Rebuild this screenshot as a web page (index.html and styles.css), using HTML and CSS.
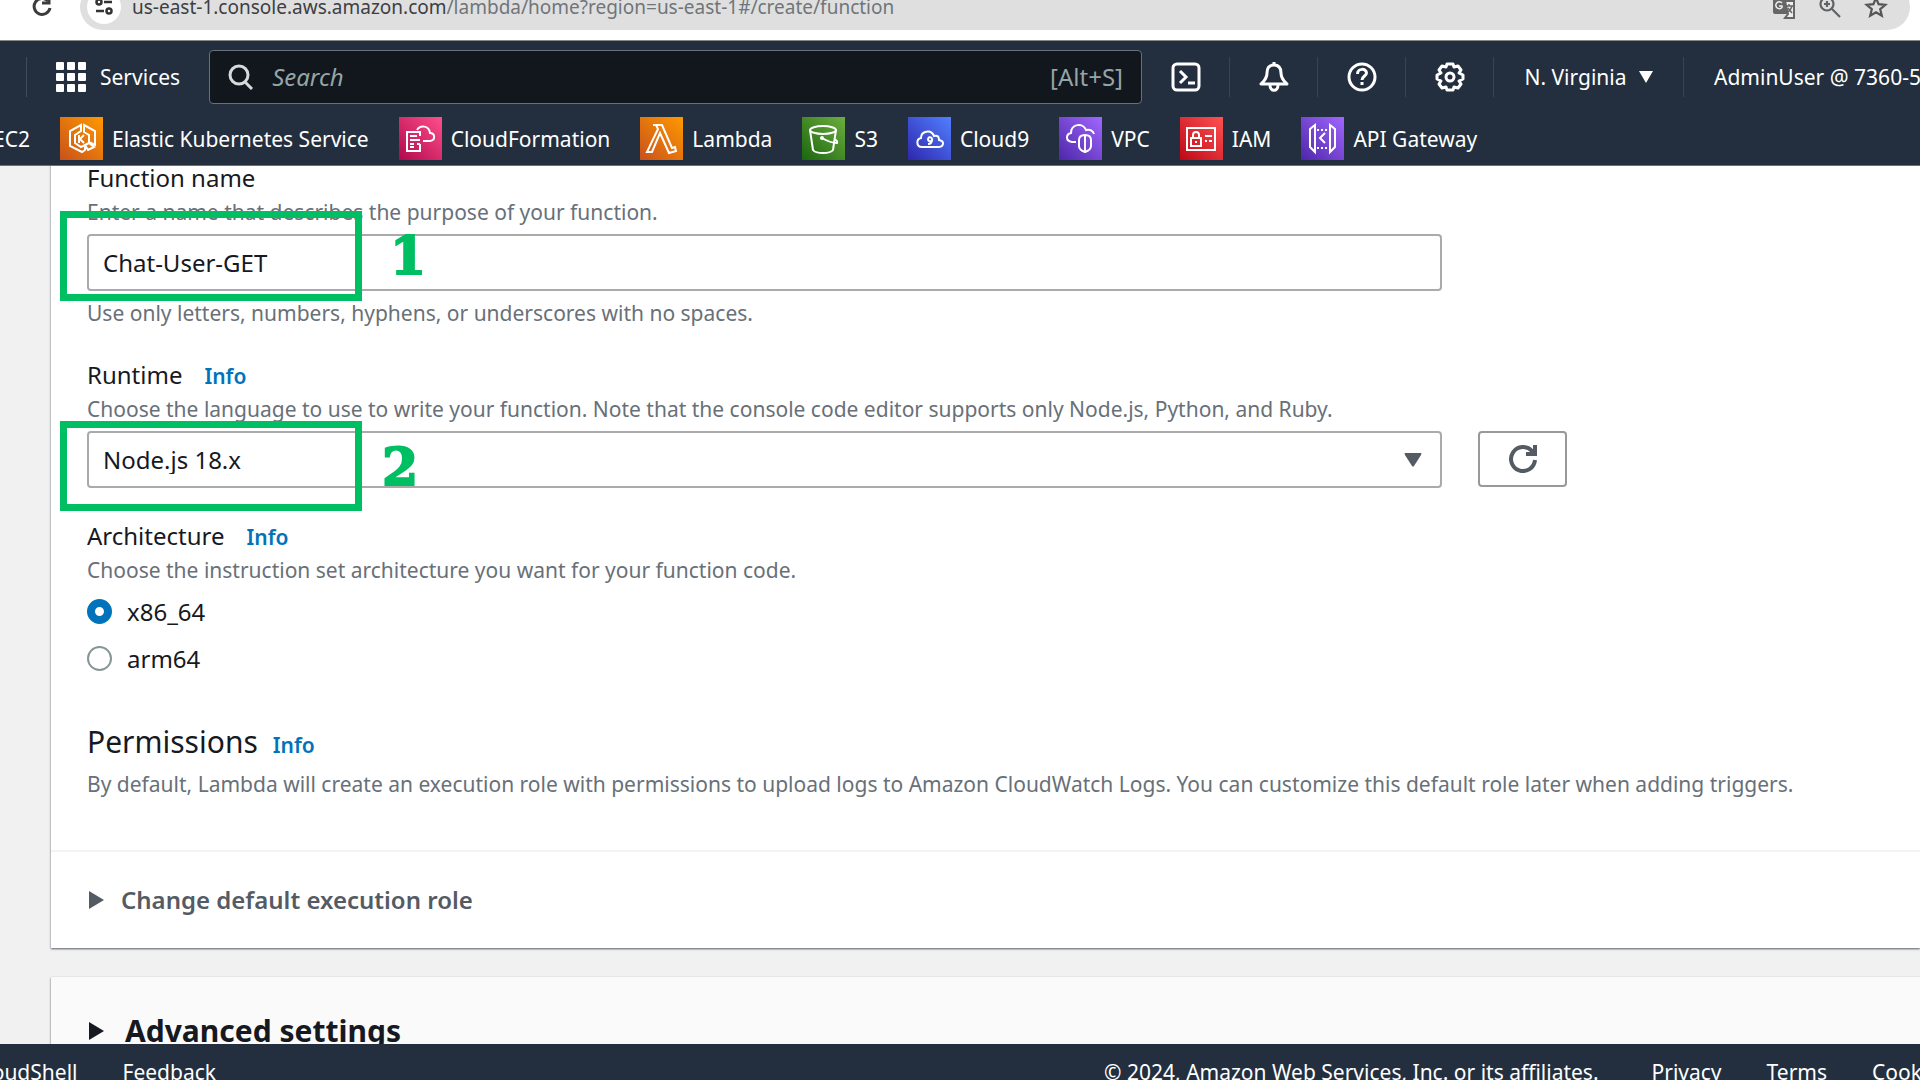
FILE: index.html
```html
<!DOCTYPE html>
<html lang="en">
<head>
<meta charset="utf-8">
<title>Create function - Lambda</title>
<link rel="stylesheet" href="styles.css">
</head>
<body>
<div class="browser">
  <button class="plain reload" aria-label="Reload">
    <svg width="24" height="24" viewBox="0 0 24 24" fill="none" stroke="#3c3c3c" stroke-width="3"><path d="M18 6A8 8 0 1 0 20 13"/><path d="M19 1v7h-7"/></svg>
  </button>
  <div class="address">
    <button class="plain site" aria-label="View site information">
      <svg width="20" height="20" viewBox="0 0 20 20" fill="none" stroke="#333" stroke-width="2.500"><circle cx="5" cy="5" r="2.500"/><path d="M10 5h8M2 14h8"/><circle cx="15" cy="14" r="2.500"/></svg>
    </button>
    <span class="url"><span class="host">us-east-1.console.aws.amazon.com</span>/lambda/home?region=us-east-1#/create/function</span>
    <button class="plain" aria-label="Translate this page">
      <svg width="24" height="24" viewBox="0 0 24 24"><path d="M1 2h11l4 17H3a2 2 0 0 1-2-2z" fill="#666"/><path d="M13 6h9v17h-9l3-4z" fill="#eee" stroke="#666" stroke-width="2"/><path d="M10 8a3.500 3.500 0 1 0 0 4.500V11H7" fill="none" stroke="#eee" stroke-width="1.500"/><path d="M14 11h7M17 9v2M20 11c-1 4-3 5-4 6M16 13l4 5" fill="none" stroke="#666" stroke-width="1.500"/></svg>
    </button>
    <button class="plain" aria-label="Zoom">
      <svg width="24" height="24" viewBox="0 0 24 24" fill="none" stroke="#5f6368" stroke-width="2.200"><circle cx="9" cy="9" r="6.500"/><path d="M14 14l8 8M6 9h6M9 6v6"/></svg>
    </button>
    <button class="plain" aria-label="Bookmark this tab">
      <svg width="24" height="24" viewBox="0 0 24 24" fill="none" stroke="#555" stroke-width="2.200"><path d="M12 3l2.600 6.200 6.800.6-5.200 4.400 1.600 6.600L12 17.300l-5.800 3.500 1.600-6.600L2.600 9.800l6.800-.6z"/></svg>
    </button>
  </div>
</div>

<header class="header">
  <div class="topnav">
    <button class="plain services">
      <svg width="30" height="30" viewBox="0 0 30 30" fill="#fff"><rect width="8" height="8" rx="1"/><rect x="11" width="8" height="8" rx="1"/><rect x="22" width="8" height="8" rx="1"/><rect y="11" width="8" height="8" rx="1"/><rect x="11" y="11" width="8" height="8" rx="1"/><rect x="22" y="11" width="8" height="8" rx="1"/><rect y="22" width="8" height="8" rx="1"/><rect x="11" y="22" width="8" height="8" rx="1"/><rect x="22" y="22" width="8" height="8" rx="1"/></svg>
      Services
    </button>
    <label class="search">
      <svg width="26" height="26" viewBox="0 0 26 26" fill="none" stroke="#d5dbdb" stroke-width="3"><circle cx="11" cy="11" r="9"/><path d="M17 18l7 7"/></svg>
      <input type="text" placeholder="Search" aria-label="Search">
      <span>[Alt+S]</span>
    </label>
    <button class="plain tool" aria-label="CloudShell">
      <svg width="30" height="30" viewBox="0 0 30 30" fill="none" stroke="#fff" stroke-width="3"><rect x="2" y="2" width="26" height="26" rx="4"/><path d="M9 9l6 6-6 6M17 21h7"/></svg>
    </button>
    <button class="plain tool" aria-label="Notifications">
      <svg width="30" height="30" viewBox="0 0 30 30" fill="none" stroke="#fff" stroke-width="3" stroke-linejoin="round"><path d="M15 3c-5 0-7 3-7 8 0 6-3 8-6 11h26c-3-3-6-5-6-11 0-5-2-8-7-8z"/><path d="M15 0v4M11 23c0 7 8 7 8 0"/></svg>
    </button>
    <button class="plain tool" aria-label="Help">
      <svg width="30" height="30" viewBox="0 0 30 30" fill="none" stroke="#fff" stroke-width="3"><circle cx="15" cy="15" r="13"/><path d="M10.500 12c0-6 9-6 9-1 0 3-4.500 3-4.500 7M15 20v3"/></svg>
    </button>
    <button class="plain tool" aria-label="Settings">
      <svg width="30" height="30" viewBox="0 0 30 30" fill="none" stroke="#fff" stroke-width="3" stroke-linejoin="round"><path d="M12 2h6l1 3 4-1 3 4-2 3 4 2v4l-4 2 2 3-3 4-4-1-1 3h-6l-1-3-4 1-3-4 2-3-4-2v-4l4-2-2-3 3-4 4 1z"/><circle cx="15" cy="15" r="4"/></svg>
    </button>
    <button class="plain region">N. Virginia <svg width="14" height="12" viewBox="0 0 14 12" fill="#fff"><path d="M0 0h14L7 12z"/></svg></button>
    <button class="plain account">AdminUser @ 7360-5</button>
  </div>
  <nav class="favorites" aria-label="Favorites">
    <a href="#">EC2</a>
    <a href="#"><svg class="orange" viewBox="0 0 43 43"><path d="M21 8v6l-6 4v8l6 4 4-2v5l-3 2-12-6V14zM24 8l11 6v14l-6-3v-7l-5-3zM25 28l4-2 5 4-6 3z"/><path d="M19 18v8M24 18l-4 4 4 4"/></svg>Elastic Kubernetes Service</a>
    <a href="#"><svg class="pink" viewBox="0 0 43 43"><path d="M21 19v-4H8v19h13v-7M11 19h7M11 23h10M11 27h4M11 30h4M18 27h3M24 24h7c6-1 5-8 0-8-1-8-10-8-13-3"/></svg>CloudFormation</a>
    <a href="#"><svg class="orange" viewBox="0 0 43 43"><path d="M13 8h9l10 23 3-1 1 4-7 2-9-20-8 19H7l11-23-2-4h-3z"/></svg>Lambda</a>
    <a href="#"><svg class="green" viewBox="0 0 43 43"><ellipse cx="21" cy="13" rx="13" ry="4"/><path d="M8 13l3 20c3 4 17 4 20 0l3-20M20 21c5 3 10 5 15 5 1-2-1-3-3-4"/><circle cx="20" cy="21" r="1"/></svg>S3</a>
    <a href="#"><svg class="blue" viewBox="0 0 43 43"><path d="M14 30c-6 0-6-8-1-9 0-7 10-9 13-2 4-1 5 1 5 4 6 1 5 7-1 7z"/><path d="M24 22a2 2 0 1 0-1 2c2 0 1-3 1-2 0 3-1 5-4 5"/></svg>Cloud9</a>
    <a href="#"><svg class="purple" viewBox="0 0 43 43"><path d="M17 25h-4c-7-1-6-8-1-9 0-9 12-11 15-3 4-1 7 1 8 4"/><path d="M26 18c4 0 6 2 6 5v6c0 3-3 5-6 6-3-1-6-3-6-6v-6c0-3 2-5 6-5zM26 18v17"/></svg>VPC</a>
    <a href="#"><svg class="red" viewBox="0 0 43 43"><path d="M7 11h28v22H7zM11 21h10v8H11zM13 21v-3c0-4 6-4 6 0v3M16 24v2M25 19h7M25 24h2M29 24h3"/></svg>IAM</a>
    <a href="#"><svg class="purple" viewBox="0 0 43 43"><path d="M14 8L9 12v18l5 5zM29 8l5 4v18l-5 5zM24 16l-5 5 5 5"/><path d="M16 13h12M16 31h12" stroke-dasharray="2 2"/></svg>API Gateway</a>
  </nav>
</header>

<main class="main">
  <form class="panel">
    <div class="body">
      <div class="field">
        <div class="title"><label class="label" for="name">Function name</label></div>
        <p class="hint">Enter a name that describes the purpose of your function.</p>
        <div class="control">
          <div class="box"><input id="name" type="text" value="Chat-User-GET"></div>
          <div class="frame first"></div>
          <div class="number one">1</div>
        </div>
        <p class="hint">Use only letters, numbers, hyphens, or underscores with no spaces.</p>
      </div>
      <div class="field">
        <div class="title"><label class="label" for="runtime">Runtime</label><a class="info" href="#">Info</a></div>
        <p class="hint">Choose the language to use to write your function. Note that the console code editor supports only Node.js, Python, and Ruby.</p>
        <div class="control">
          <div class="box">
            <select id="runtime"><option>Node.js 18.x</option></select>
            <svg width="18" height="14" viewBox="0 0 18 14" fill="#545b64"><path d="M1 0h16q1 0 0 2l-7 11q-1 1-2 0L1 2q-1-2 0-2z"/></svg>
          </div>
          <button class="refresh" type="button" aria-label="Refresh runtimes">
            <svg width="30" height="30" viewBox="0 0 30 30" fill="none" stroke="#545b64" stroke-width="4"><path d="M27 16a12 12 0 1 1-3-9l2 2"/><path d="M27 1v9h-9"/></svg>
          </button>
          <div class="frame second"></div>
          <div class="number two">2</div>
        </div>
      </div>
      <fieldset class="field">
        <legend class="title"><span class="label">Architecture</span><a class="info" href="#">Info</a></legend>
        <p class="hint">Choose the instruction set architecture you want for your function code.</p>
        <div class="radios">
          <label><input type="radio" name="arch" checked>x86_64</label>
          <label><input type="radio" name="arch">arm64</label>
        </div>
      </fieldset>
      <section class="permissions">
        <div class="title"><h2>Permissions</h2><a class="info" href="#">Info</a></div>
        <p class="hint">By default, Lambda will create an execution role with permissions to upload logs to Amazon CloudWatch Logs. You can customize this default role later when adding triggers.</p>
      </section>
    </div>
    <button class="plain role" type="button"><svg width="15" height="18" viewBox="0 0 15 18" fill="#545b64"><path d="M0 0l15 9L0 18z"/></svg>Change default execution role</button>
  </form>
  <section class="panel advanced">
    <button class="plain" type="button"><svg width="15" height="18" viewBox="0 0 15 18" fill="#16191f"><path d="M0 0l15 9L0 18z"/></svg>Advanced settings</button>
  </section>
</main>

<footer class="footer">
  <a class="shell" href="#">CloudShell</a>
  <a href="#">Feedback</a>
  <span class="copy">© 2024, Amazon Web Services, Inc. or its affiliates.</span>
  <a href="#">Privacy</a>
  <a href="#">Terms</a>
  <a class="cookies" href="#">Cookie preferences</a>
</footer>
</body>
</html>
```
FILE: styles.css
```css
* { box-sizing: border-box; }
body {
  margin: 0;
  height: 100vh;
  display: flex;
  flex-direction: column;
  overflow: hidden;
  background: #f1f1f1;
  color: #16191f;
  font: 21px/28px "Noto Sans", sans-serif;
}
a { color: inherit; text-decoration: none; }
p, h2 { margin: 0; }
svg { flex: none; display: block; }
button, input, select { font: inherit; color: inherit; }
.plain { border: 0; padding: 0; background: none; display: flex; align-items: center; white-space: nowrap; }

/* Browser toolbar */
.browser {
  flex: none;
  height: 41px;
  padding: 0 10px 10px 30px;
  display: flex;
  align-items: flex-end;
  gap: 26px;
  overflow: hidden;
  background: #fff;
  border-bottom: 1px solid #888;
}
.browser .reload { height: 46px; }
.address {
  flex: 1;
  height: 46px;
  padding: 0 22px 0 7px;
  display: flex;
  align-items: center;
  gap: 22px;
  border-radius: 23px;
  background: #dfdfdf;
}
.site {
  width: 34px;
  height: 34px;
  justify-content: center;
  border-radius: 50%;
  background: #fff;
  margin-right: -11px;
}
.url { flex: 1; color: #70757a; font-size: 19px; white-space: nowrap; }
.host { color: #3c4043; }

/* Console header */
.header { flex: none; background: #232f3e; color: #fff; border-bottom: 1px solid #687078; }
.topnav { display: flex; align-items: center; padding-top: 9px; }
.services { height: 40px; margin-left: 26px; padding: 0 29px; gap: 14px; border-left: 1px solid #414d5c; }
.search {
  flex: 1;
  min-width: 0;
  height: 54px;
  padding: 0 18px;
  display: flex;
  align-items: center;
  gap: 18px;
  border: 1px solid #687078;
  border-radius: 4px;
  background: #12161d;
  color: #95a5a6;
  font-size: 24px;
}
.search input { flex: 1; min-width: 0; border: 0; padding: 0; background: none; outline: 0; }
.search input::placeholder { color: #95a5a6; font-style: italic; opacity: 1; }
.tool { width: 88px; height: 40px; justify-content: center; border-right: 1px solid #38444f; }
.region { width: 190px; height: 40px; justify-content: center; gap: 12px; border-right: 1px solid #38444f; }
.account { width: 236px; padding-left: 30px; overflow: hidden; }
.favorites { display: flex; align-items: center; gap: 30px; margin-left: -7px; padding: 13px 0 5px; white-space: nowrap; }
.favorites a { display: flex; align-items: center; gap: 9px; }
.favorites svg { width: 43px; height: 43px; fill: none; stroke: #fff; stroke-width: 2; }
.orange { background: linear-gradient(45deg, #c8511b, #f90); }
.pink { background: linear-gradient(45deg, #b0084d, #ff4f8b); }
.green { background: linear-gradient(45deg, #1b660f, #6cae3e); }
.blue { background: linear-gradient(45deg, #2e27ad, #527fff); }
.purple { background: linear-gradient(45deg, #4d27a8, #a166ff); }
.red { background: linear-gradient(45deg, #bd0816, #ff5252); }

/* Form */
.main { flex: 1; min-height: 0; overflow: hidden; padding-left: 51px; }
.panel { background: #fff; box-shadow: 0 1px 2px #545b64; }
.main form { margin-top: -8px; }
.body { padding: 0 50px 52px 36px; }
.field { border: 0; margin: 0 0 28px; padding: 0; }
.label { font-size: 24px; line-height: 40px; }
.title { display: flex; align-items: baseline; gap: 22px; padding: 0; height: 40px; }
.info { color: #0073bb; font-weight: 600; }
.hint { color: #687078; }
.control { position: relative; display: flex; gap: 36px; align-items: flex-start; margin: 8px 0; }
.box {
  width: 76%;
  height: 57px;
  padding-right: 18px;
  display: flex;
  align-items: center;
  border: 2px solid #aaa;
  border-radius: 4px;
}
.box input, .box select {
  appearance: none;
  flex: 1;
  min-width: 0;
  height: 100%;
  border: 0;
  padding: 0 14px;
  background: none;
  font-size: 24px;
}
.refresh { width: 89px; height: 56px; padding: 0; display: grid; place-items: center; border: 2px solid #999; border-radius: 4px; background: #fff; }
.radios { padding-top: 4px; }
.radios label { display: flex; align-items: center; gap: 15px; height: 47px; font-size: 24px; }
.radios input { appearance: none; width: 25px; height: 25px; margin: 0; border: 2px solid #879596; border-radius: 50%; }
.radios input:checked { border: 8px solid #0073bb; }
.permissions { padding-top: 12px; }
.permissions .title { gap: 15px; margin-bottom: 8px; }
.permissions h2 { font-size: 30px; line-height: 40px; font-weight: 400; }
.role { width: 100%; height: 98px; padding: 0 38px; gap: 17px; border-top: 2px solid #f3f3f3; color: #545b64; font-size: 24px; font-weight: 600; }
.advanced { margin-top: 29px; height: 120px; padding: 34px 38px; background: #fafafa; }
.advanced button { gap: 21px; font-size: 30px; line-height: 40px; font-weight: 700; }

/* Step annotations laid over the form */
.frame { position: absolute; left: -27px; width: 302px; height: 90px; border: 7px solid #00bf63; }
.first { top: -23px; }
.second { top: -10px; }
.number {
  position: absolute;
  color: #00bf63;
  font: 700 52px/52px "DejaVu Serif", serif;
  -webkit-text-stroke: 2px #00bf63;
}
.one { left: 303px; top: -4px; }
.two { left: 295px; top: 10px; }

.footer {
  flex: none;
  height: 36px;
  padding-top: 14px;
  display: flex;
  gap: 45px;
  overflow: hidden;
  background: #232f3e;
  color: #fff;
  white-space: nowrap;
}
.shell { margin-left: -27px; }
.copy { margin: 0 8px 0 auto; }
.cookies { width: 48px; overflow: hidden; }
```
